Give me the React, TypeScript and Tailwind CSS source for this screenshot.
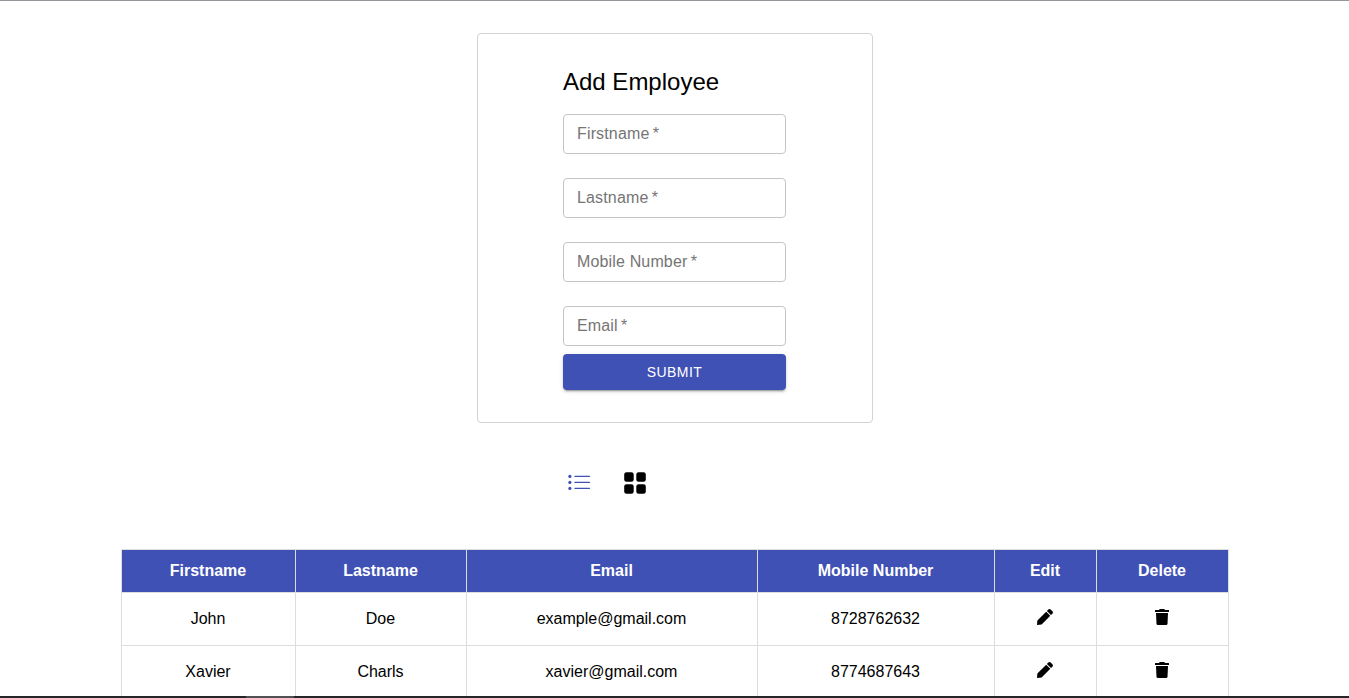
const fields = ["Firstname", "Lastname", "Mobile Number", "Email"];
const headings = ["Firstname", "Lastname", "Email", "Mobile Number", "Edit", "Delete"];
const employees = [
  ["John", "Doe", "example@gmail.com", "8728762632"],
  ["Xavier", "Charls", "xavier@gmail.com", "8774687643"],
];

function ListIcon() {
  return (
    <svg className="size-7 text-[#3f51b5]" viewBox="0 0 28 28" fill="currentColor">
      <path d="M10 8.400H24.300M10 14.400H24.300M10 20.400H24.300" stroke="currentColor" strokeWidth="1.4" strokeLinecap="round" />
      <circle cx="4.9" cy="8.400" r="1.600" />
      <circle cx="4.9" cy="14.400" r="1.600" />
      <circle cx="4.9" cy="20.400" r="1.600" />
    </svg>
  );
}

function GridIcon() {
  return (
    <svg className="size-7" viewBox="0 0 28 28" fill="currentColor">
      <rect x="3.2" y="3.2" width="9.500" height="9.500" rx="2.300" />
      <rect x="15.300" y="3.200" width="9.500" height="9.500" rx="2.300" />
      <rect x="3.2" y="15.300" width="9.500" height="9.500" rx="2.300" />
      <rect x="15.300" y="15.300" width="9.500" height="9.500" rx="2.300" />
    </svg>
  );
}

function PencilIcon() {
  return (
    <svg className="size-4" viewBox="0 0 16 16" fill="currentColor">
      <path d="M0 16l.4-4.600L9.200 2.700l4.100 4.100L4.600 15.600zM9.900 2l1.400-1.400q1.200-1.100 2.400 0l1.700 1.700q1.100 1.200 0 2.400L14 6.100z" />
    </svg>
  );
}

function TrashIcon() {
  return (
    <svg className="h-4 w-3.5" viewBox="0 0 14 16" fill="currentColor">
      <path d="M0 1.200Q0 1 .4 1H4L4.500.3Q4.700 0 5.200 0h3.600q.5 0 .7.300L10 1h3.600q.4 0 .4.200V3H0z" />
      <path d="M1 4h12l-.5 10.800Q12.400 16 11.200 16H2.800q-1.200 0-1.300-1.200z" />
    </svg>
  );
}

export default function App() {
  return (
    <div className="flex h-[698px] flex-col overflow-hidden border-t border-[#96959b] bg-white font-['Liberation_Sans',Arial,sans-serif] text-base text-black">
      <main className="flex min-h-0 flex-1 flex-col overflow-hidden">
        <form className="mt-8 ml-[477px] h-[390px] w-[396px] shrink-0 rounded border border-[#d3d3d3] pt-8 pl-[85px]">
          <h1 className="mb-4 h-8 text-2xl">Add Employee</h1>
          <div className="flex w-[223px] flex-col gap-6">
            {fields.map((field) => (
              <label key={field} className="flex h-10 items-center rounded border border-[#c4c4c4] pl-[13px] tracking-[0.15px] text-[#757575]">
                {field}
                <span>&thinsp;*</span>
              </label>
            ))}
          </div>
          <button type="button" className="mt-2 flex h-9 w-[223px] items-center justify-center rounded bg-[#3f51b5] text-sm tracking-[0.4px] text-white shadow-[0_3px_1px_-2px_rgba(0,0,0,0.2),0_2px_2px_0_rgba(0,0,0,0.14),0_1px_5px_0_rgba(0,0,0,0.12)]">
            SUBMIT
          </button>
        </form>
        <div className="mt-[45px] ml-[565px] flex h-7 shrink-0 gap-7">
          <ListIcon />
          <div className="pt-px"><GridIcon /></div>
        </div>
        <table className="mt-[53px] ml-[121px] w-[1108px] shrink-0 table-fixed border-collapse text-center">
          <colgroup>
            <col className="w-[174px]" />
            <col className="w-[171px]" />
            <col className="w-[291px]" />
            <col className="w-[237px]" />
            <col className="w-[102px]" />
            <col className="w-[132px]" />
          </colgroup>
          <thead>
            <tr className="h-[43px] bg-[#3f51b5] text-white">
              {headings.map((heading) => (
                <th key={heading} className="border border-[#dddddd] p-0 pr-px font-bold">{heading}</th>
              ))}
            </tr>
          </thead>
          <tbody>
            {employees.map((employee) => (
              <tr key={employee[0]} className="h-[53px]">
                {employee.map((value) => (
                  <td key={value} className="border border-[#dddddd] p-0 pr-px">{value}</td>
                ))}
                <td className="border border-[#dddddd] p-0 pr-px">
                  <div className="flex justify-center pb-1"><PencilIcon /></div>
                </td>
                <td className="border border-[#dddddd] p-0 pr-px">
                  <div className="flex justify-center pb-1"><TrashIcon /></div>
                </td>
              </tr>
            ))}
          </tbody>
        </table>
      </main>
      <div className="flex h-0.5 shrink-0 bg-[#252629] pl-[246px]">
        <div className="w-12 bg-[#505154]" />
      </div>
    </div>
  );
}
